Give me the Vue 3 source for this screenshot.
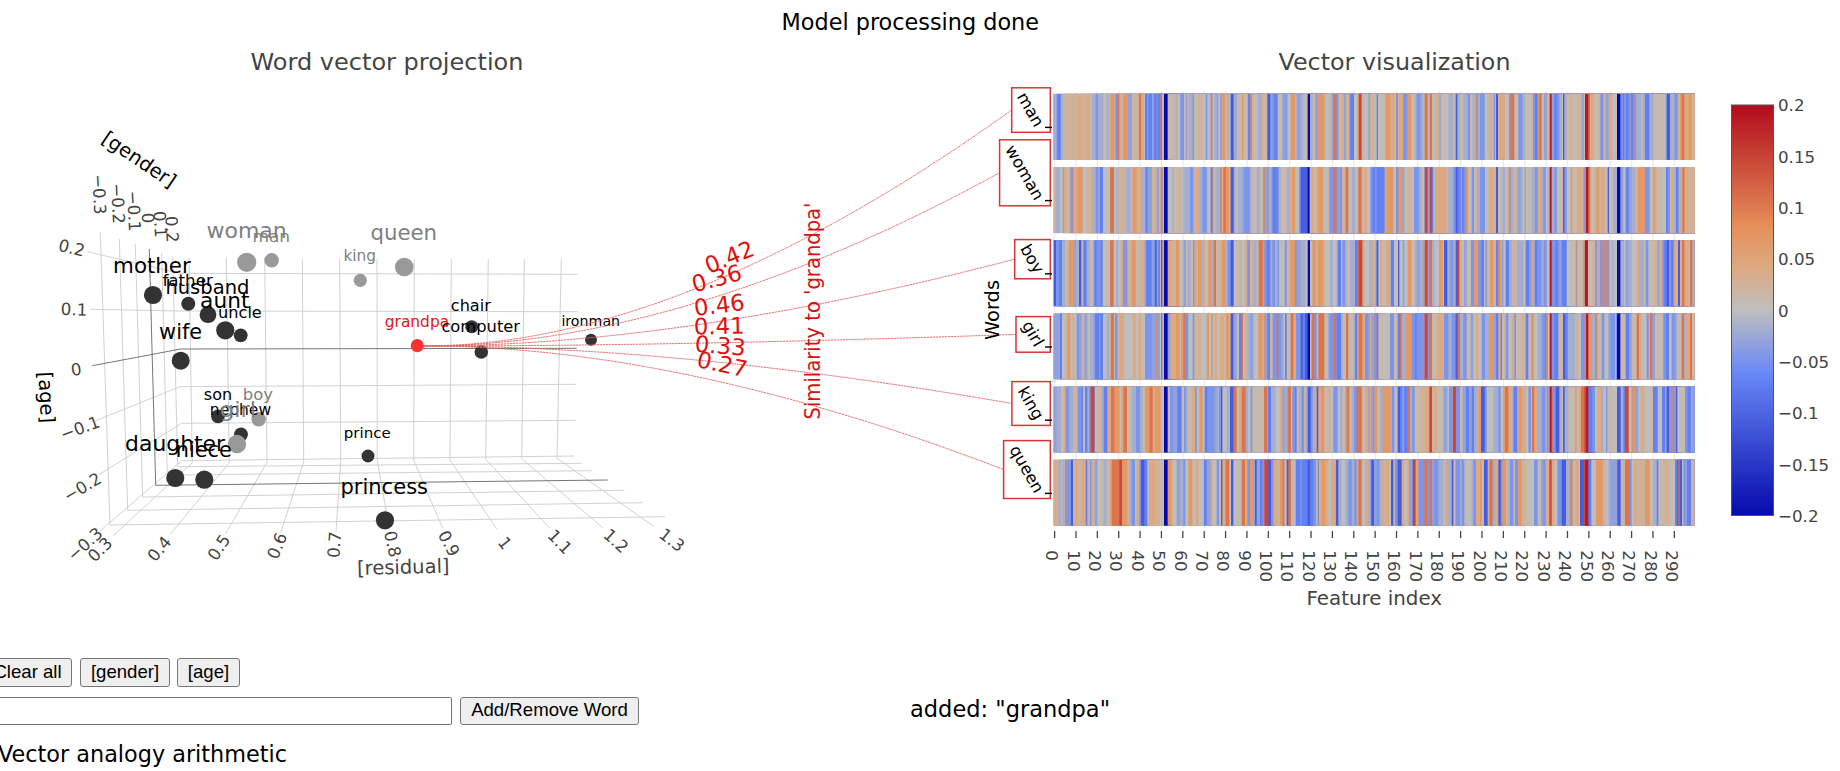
<script setup>
// Word scatter: label, dot centre and radius, label left edge, baseline, width, font size
const words = [
  ['woman', 246.7, 262.3, 9.6, 207.3, 238.3, 79.4, 21.8, 'dim'],
  ['man', 271.7, 260.3, 7.2, 253.3, 242.3, 36.7, 16.5, 'dim'],
  ['king', 360.3, 280.3, 6.6, 344.3, 261.3, 31.7, 15, 'dim'],
  ['queen', 404.3, 267, 9.3, 371.3, 240.3, 65.7, 21, 'dim'],
  ['mother', 153, 295, 9.1, 114, 272.7, 76.7, 21, ''],
  ['father', 188.3, 303.7, 7, 163.3, 286, 49.4, 16.2, ''],
  ['husband', 208, 314.7, 8.4, 166.3, 294, 83, 19.5, ''],
  ['aunt', 225.3, 330.3, 9.1, 201, 308, 48.3, 21.2, ''],
  ['uncle', 240.7, 335.3, 6.9, 219, 318.3, 42.7, 15.8, ''],
  ['wife', 180.7, 360.7, 9, 160, 339, 42, 20.4, ''],
  ['son', 218, 416.3, 6.9, 204.7, 399.7, 27.3, 15.5, ''],
  ['boy', 258.7, 419.3, 7.2, 243.7, 399.7, 29.3, 15.9, 'dim'],
  ['nephew', 241, 434.3, 6.9, 210.7, 415, 60.3, 15.3, ''],
  ['girl', 237, 444, 9.2, 220.7, 417.3, 35.3, 21.5, 'dim'],
  ['daughter', 175.3, 478, 9.1, 126, 451, 99, 21.5, ''],
  ['niece', 204.3, 479.7, 9.1, 176.7, 457.3, 55, 20.5, ''],
  ['prince', 368, 456, 6.5, 344.7, 437.7, 46, 14.9, ''],
  ['princess', 385, 520.3, 9.1, 341.3, 494.3, 86.7, 20.8, ''],
  ['grandpa', 417.3, 345.7, 6.6, 385.7, 326.7, 63.3, 15.2, 'hot'],
  ['chair', 471.7, 326.7, 6.5, 451.7, 310.7, 39, 15.7, ''],
  ['computer', 481.3, 352, 6.8, 442.3, 332, 77.7, 16, ''],
  ['ironman', 591, 339.7, 6, 562.3, 325.7, 57.7, 14.2, ''],
]

const gridLines = [
  '100.3,232.3 110,525 665,516.7',
  '119.3,239 127.7,510.3 643,502.7',
  '135.3,244.3 142.7,497 624.3,490.3',
  '161.7,253.3 167.3,475 591.7,470.7',
  '172.7,256.7 177.7,466.7 582.3,463.3',
  '189,258 192.3,462.7 113.3,535.7',
  '226.3,258 229.3,462.7 170.3,534.3',
  '264.7,258 267,462.3 225.3,534.3',
  '302.3,258.5 303.7,462 280.7,532.7',
  '339.7,259 340.7,461.3 336,531.7',
  '377,259.3 377.3,460.7 389.3,528.3',
  '414.3,259.3 413.7,460 442.7,528.3',
  '451.3,259.3 450,460 496.7,529',
  '488.3,259.3 485.7,459.3 550,528.3',
  '524.3,259.3 521.7,458.7 602.7,527.7',
  '561.3,259.3 557,458.3 654.3,526.7',
  '87.3,251.7 180,273.3 578,274.3',
  '90.7,309.3 180,311 577.7,311.7',
  '95,421 180,386.7 576,384.3',
  '98.3,475 181.7,423.3 575.7,420.3',
  '100,531 181.7,460.7 574.3,456',
]
const zeroLines = ['149.3,249 155.7,485.3 607.7,480', '92.3,365.7 180.7,349 576.7,348.3']

// Rotated tick labels: text, centre x, centre y, angle
const ticks3d = [
  ['0.2', 71.7, 247.7, 13], ['0.1', 74, 309.3, 2], ['0', 76.3, 369.3, -8],
  ['−0.1', 80, 428, -20], ['−0.2', 82.3, 487, -31], ['−0.3', 84.7, 544, -42],
  ['0.3', 100, 549.3, -45], ['0.4', 159.3, 548.7, -50], ['0.5', 218.7, 547.3, -57],
  ['0.6', 277, 545.7, -68], ['0.7', 334.3, 544.7, -86], ['0.8', 392.7, 544, 78],
  ['0.9', 449, 543.3, 62], ['1', 505, 543, 52], ['1.1', 560, 541.7, 46],
  ['1.2', 616, 540.7, 42], ['1.3', 672, 540, 38],
  ['−0.3', 99.3, 194.3, 87], ['−0.2', 118, 203.5, 87], ['−0.1', 134, 211, 87],
  ['0', 148, 218, 87], ['0.1', 160.3, 224.3, 87], ['0.2', 172, 229.3, 87],
]

const similarities = [
  ['0.42', 729.3, 257, -22], ['0.36', 716.7, 278.3, -15], ['0.46', 719.3, 305, -7],
  ['0.41', 719.3, 326, -1], ['0.33', 720.3, 345.7, 5], ['0.27', 722.3, 364.3, 12],
]

// Word boxes beside the heatmap: left, top, bottom
const rowLabels = [
  ['man', 1011.7, 87.8, 132.3], ['woman', 999.6, 139.8, 205.8], ['boy', 1014.7, 239.6, 278.8],
  ['girl', 1016, 316.6, 352.2], ['king', 1011.9, 381.6, 425.4], ['queen', 1003.6, 440.6, 498.5],
]

const level = {
  A: -0.2, B: -0.11, C: -0.07, D: -0.048, E: -0.033, F: -0.018, G: 0,
  H: 0.011, I: 0.024, J: 0.042, K: 0.068, L: 0.105, M: 0.145, N: 0.188,
}
const scale = [
  [0, 5, 10, 172], [0.35, 106, 137, 247], [0.5, 190, 190, 190],
  [0.6, 220, 170, 132], [0.7, 230, 145, 90], [1, 178, 10, 28],
]
function colour(code) {
  if (code === 'P') return 'rgb(161,143,184)'
  if (code === 'Q') return 'rgb(194,142,130)'
  const t = (level[code] + 0.2) / 0.4
  const i = Math.max(1, scale.findIndex(s => s[0] >= t))
  const a = scale[i - 1]
  const b = scale[i]
  const f = (t - a[0]) / (b[0] - a[0])
  return `rgb(${[1, 2, 3].map(k => Math.round(a[k] + (b[k] - a[k]) * f)).join(',')})`
}

// Each row is two runs of stops: offset in thirds of a pixel, then a level letter
const heat = [
  ['40E 44G 47E 52C 62F 70G 74J 78I 112J 123I 139J 150H 155F 167D 174F 190G 200F 206I 212K 223H 226D 233L 238I 250K 264E 276H 282I 297L 303J 312G 315C 321D 326C 336E 342C 350D 353C 361L 366G 368I 372A 383H 400I 408F 413H 421D 432G 437E 441I 446F 458D 462H 474I 485H 492G 497D 502G 509F 512Q 518H 522F 530E 535G 540E 545K 555I 564F 567H 572B 581F 587E 590H 606K 610H 622F 624C 630Q 636I 642H 654F 664J 669H 675I 682B 691E 696D 703C 713H 727E 737D 742G 752K 766G 770E 781F 790G 797I 803A 810F 818H 825E 833K 843K 852I 858G 865H 872F 878D 881L 889D 895H 905J 912E 918I 927E 931C 942G 952J 956M 965H 975G 985E 990H',
   '0I 12H 20C 24G 36H 46K 60J 74H 78D 84J 99D 110E 114K 123H 137E 142D 150E 155F 160H 164L 173G 179L 186H 195I 208E 212H 225G 235F 250H 257B 262F 270H 280F 293D 300H 308F 318Q 324F 330D 344G 350H 358J 366G 371D 375H 378B 384J 405G 412H 417P 422L 433H 445D 457F 465H 478G 483I 489D 495C 503K 508L 515G 522E 530I 536G 539N 545E 553C 560D 568F 575H 579B 583F 590H 600J 606H 622I 635E 642H 645N 655L 660J 672H 685I 691D 700I 707E 716J 727G 735H 741A 751D 758C 763E 767C 775D 781P 784C 789P 798F 813H 818F 825C 838F 850H 878G 885F 890B 900F 914D 923I 930K 935L 943J 956K 965I'],
  ['40I 47F 60G 68E 72J 80H 88F 92P 100J 113K 128G 140I 153J 158F 167D 174E 180C 189G 210L 222G 228F 232I 258F 272H 277K 290I 300J 304F 315D 319C 323E 336I 350E 357I 362Q 369G 372A 383G 393H 398F 402H 415I 422G 430F 450D 460I 470J 478F 487D 500F 503G 512C 517Q 520H 527F 540Q 545J 550L 558K 567J 572B 581F 587G 595F 608E 612D 630F 635H 650F 660H 669Q 676E 682P 686F 695D 698C 715F 722H 740F 748J 757K 766G 777D 782B 803A 809H 813J 822G 828J 835K 850G 858H 868D 880L 889D 893E 900D 906I 917L 925G 935F 945H 955L 965H 972J 982G 990F',
   '0E 3D 8C 15D 20C 44J 50K 70G 78D 85K 97E 103H 115I 125H 132D 147F 155H 162P 165M 173E 179M 186C 190G 195F 198J 230H 235F 250D 257B 262C 272E 276C 282D 288K 295G 305D 312H 320K 323F 330D 345G 350H 358J 370I 378B 384H 395F 405H 413J 417P 422F 430I 442E 452F 458G 464E 468H 480G 485F 495D 503J 513F 520D 527G 533F 536H 539N 545F 553D 560G 568H 575I 579B 583D 590G 602K 607H 622J 633H 640P 648N 655L 660J 665G 672I 680K 687I 697J 705G 713B 717H 730F 741A 751E 760G 767C 776E 785F 795I 803K 825D 836E 840H 850K 856I 860H 878G 888C 893D 900H 905J 912F 918C 925F 932J 937L 943J 955I'],
  ['40D 42B 48D 57C 66F 75H 80I 87K 103E 108F 117B 124H 130C 140F 150H 160E 163C 170D 182C 188G 198H 210L 221G 228F 235G 241I 248P 255Q 258D 262I 275K 287H 297I 310J 314E 318C 335E 341D 345B 350E 355C 360H 363B 367J 370F 372A 383J 393I 408K 418G 430E 438H 443F 452H 459D 463J 475K 483F 490J 495H 505K 513F 521L 528H 532I 545K 555F 563D 572B 581G 590H 598I 606G 615J 622D 630I 640F 650H 656L 668K 673D 680C 691F 697D 705F 713D 717H 727G 734D 740I 752K 765P 770E 782F 797G 803A 810G 817K 827I 833K 850I 855G 870F 878G 890F 893C 903G 907D 915F 920H 930F 945C 952L 956M 967J 973G 988F',
   '0F 5J 12H 16E 20B 25G 30J 36H 47J 58F 63C 72G 84B 88G 98E 103G 113K 124H 135F 140E 150F 160Q 165M 173E 178L 186F 193G 207K 218H 222B 232F 238E 243D 250F 257B 261M 268J 272H 282E 290G 295H 303D 312K 325D 334C 342G 345E 352H 360K 370I 378C 383Q 390J 395E 400G 407C 417F 427H 432J 436G 440F 460H 467C 478E 485J 490E 495C 502D 515F 521D 530G 539N 545D 556C 563D 568E 575C 590G 603H 613G 617Q 622H 640Q 645N 654H 670I 675P 680F 690P 700Q 710P 718G 725F 730G 741A 751F 762G 767E 775F 785G 800J 808F 822H 827D 835H 850I 862E 868J 877D 882C 890B 897D 903C 911J 920H 924B 930I 936L 943J 952I 960L 967F'],
  ['40E 60C 66G 76I 83K 91G 97J 103G 110D 117E 125I 133E 142H 150F 160E 165C 177D 181C 189G 200F 207J 213L 222H 225D 232I 238J 252G 278J 287G 295J 303H 310G 315D 335E 348Q 353E 360G 363C 367I 372A 383E 391J 408K 419H 423K 430L 435D 445G 458D 463H 468I 483G 500K 507G 513K 518H 525J 531G 540J 552H 558K 566J 572B 580E 590H 597C 605L 609H 615I 622F 630E 640G 655K 667J 673Q 677E 682C 690I 698D 710L 715D 722E 730G 735C 740H 752L 760J 768D 782B 788C 795B 803A 810H 815L 823D 830H 835L 853H 865E 870D 880L 888D 890C 903F 908H 918L 925H 940F 945C 951K 957L 967J 975D 985E',
   '0J 4E 12P 20C 25H 40G 50H 60D 72H 83C 90L 95F 108K 125D 135C 140D 158P 164M 173D 177L 186H 200J 218I 222D 235F 245D 257B 263L 270F 280D 290H 302E 310G 318J 325G 335D 345F 357K 371E 378C 385J 392C 396G 403J 408D 415G 425J 433D 438H 455I 467C 475H 483K 492G 503F 515D 525C 528Q 534G 539N 545D 553C 565H 575I 579B 585C 593F 615I 625G 633D 642P 648N 655K 665F 675Q 682H 695D 703G 715E 722D 735J 738D 741A 751H 767C 777E 785H 800L 807J 815G 830D 836J 840L 847E 855H 880D 888C 897G 905D 913E 920H 935L 942F 948J 960L 966H'],
  ['40E 50F 63H 72J 77D 85E 90F 100H 105I 113D 125C 129H 135C 142F 147D 152M 163D 165H 175I 187E 192C 202J 213L 223K 238H 243J 250L 261H 275F 288D 300F 308H 315K 328L 338J 345K 362G 372A 383H 390D 398E 412C 425H 432D 437F 443H 455J 465D 470H 478K 488G 494C 502D 522E 530F 537D 543B 547G 560F 570B 580L 590H 598J 605L 617F 625G 632D 637H 672L 681J 683C 693F 707G 720J 727E 733F 743L 753H 757D 765C 770H 777F 785D 792I 797F 803B 812D 818F 824J 830B 835J 843K 853H 862I 872G 880D 893G 900F 907H 917Q 923L 928H 935F 942D 950L 965J 968G 975J 985E',
   '0J 3E 10D 13K 22H 30F 38K 62F 66D 73G 83B 90C 97E 102C 112L 120F 127D 134H 150I 165J 178M 186I 195J 200H 220E 232G 237D 247Q 249M 258D 270H 278E 288C 297E 305C 312F 322J 327K 333B 344D 350G 370F 385D 392G 400K 405L 415J 425G 428D 432C 442G 445K 455J 467G 475D 483I 486L 493J 503F 515D 527H 530P 535E 539N 545L 548D 557B 568F 575H 579B 584F 595H 615K 620H 628J 633L 643M 648N 655C 667D 675H 683J 693F 700G 708D 712H 730G 741B 752F 760C 765M 776H 785Q 788K 795E 805G 812J 822H 830G 845I 849C 863G 876C 885E 890B 897P 918B 922G 935H 945D 953C 962E'],
  ['40J 50I 55F 63I 68F 75Q 80D 93B 99H 104J 112I 123J 137C 142I 150D 154J 158I 164E 172G 180H 190F 200H 207J 215L 238M 246K 262I 268F 275D 285G 290J 298D 303B 313C 322H 328J 345I 360H 372A 383K 393J 398G 410E 420F 430D 436G 445K 457H 468J 475G 488I 492C 500E 512J 518G 530D 537H 543B 547J 557L 568G 573B 580G 590H 605L 615J 622D 630K 640E 645B 650E 660C 668P 673M 685B 693D 700J 710I 720K 728L 733G 740B 745L 753H 760G 767C 780D 785C 803B 810C 820D 828H 833C 836J 845K 855J 865G 873J 885F 888B 895F 905G 915J 918F 925D 935F 943D 950J 955L 965G 975J 985F',
   '0E 4B 12E 20D 28F 36J 42I 50J 58G 63B 70I 75D 83B 95J 103G 112J 117E 128B 132M 137J 145P 150D 163L 172D 179L 186E 193D 205F 220G 225J 232F 245B 250I 257D 270F 275D 283H 290G 305F 310D 318J 330K 335H 342B 353I 358L 368F 375J 385B 392D 397K 408I 415F 420D 430H 435D 444K 455I 465H 475G 492D 503H 513E 520D 527I 532J 538M 545J 553G 562D 575B 588F 600Q 608H 617J 627G 630B 640M 645N 655C 664G 678K 698I 708G 715F 720E 742B 752G 758I 765L 778D 785G 790J 797I 815I 825K 840H 850F 860C 865H 880I 897H 905G 915C 922B 925L 929B 936G 940D 947F 950C 963I'],
]
const heatRight = 1694.7
const heatRows = heat.map(([left, right], r) => ({
  y: 93.9 + r * 73.17,
  cells: [[left, 1040], [right, 1370]].flatMap(([run, base]) =>
    run.split(' ').map(s => {
      const x = base + parseInt(s) / 3
      return { x, w: heatRight - x, fill: colour(s.slice(-1)) }
    })),
}))

const features = Array.from({ length: 30 }, (_, i) => ({ label: i * 10, x: 1054.6 + i * 21.37 }))
const barTicks = ['0.2', '0.15', '0.1', '0.05', '0', '−0.05', '−0.1', '−0.15', '−0.2']
</script>

<template>
  <main class="page">
    <header class="status">
      <svg class="line" width="1840" height="38">
        <text x="781.5" y="29.5" textLength="257.5" lengthAdjust="spacingAndGlyphs" class="heading">Model processing done</text>
      </svg>
    </header>

    <svg class="plots" width="1840" height="620" viewBox="0 38 1840 620">
      <defs>
        <linearGradient id="bar" x1="0" y1="1" x2="0" y2="0">
          <stop v-for="s in scale" :key="s[0]" :offset="s[0]" :stop-color="`rgb(${s[1]},${s[2]},${s[3]})`" />
        </linearGradient>
      </defs>

      <text x="250.5" y="70" textLength="273" lengthAdjust="spacingAndGlyphs" class="title">Word vector projection</text>
      <text x="1278.5" y="70" textLength="232" lengthAdjust="spacingAndGlyphs" class="title">Vector visualization</text>

      <g class="grid">
        <polyline v-for="p in gridLines" :key="p" :points="p" />
      </g>
      <g class="zero">
        <polyline v-for="p in zeroLines" :key="p" :points="p" />
      </g>
      <text
        v-for="(t, i) in ticks3d" :key="'t' + i" class="tick mid"
        :transform="`translate(${t[1]} ${t[2]}) rotate(${t[3]})`" y="6"
      >{{ t[0] }}</text>
      <text class="axis dark mid" transform="translate(138.7 160) rotate(34)" y="6">[gender]</text>
      <text class="axis dark mid" transform="translate(45.7 397.3) rotate(87)" y="6">[age]</text>
      <text class="axis mid" transform="translate(403.3 567.7) rotate(-1.5)" y="6">[residual]</text>

      <circle v-for="w in words" :key="'d' + w[0]" :cx="w[1]" :cy="w[2]" :r="w[3]" :class="['dot', w[8]]" />
      <text
        v-for="w in words" :key="'w' + w[0]" :x="w[4] - 0.9" :y="w[5]" :font-size="w[7]"
        :textLength="w[6] + 1" lengthAdjust="spacingAndGlyphs" :class="['word', w[8]]"
      >{{ w[0] }}</text>

      <g class="links">
        <path
          v-for="b in rowLabels" :key="'l' + b[0]"
          :d="`M423 346Q682 346 ${b[1]} ${(b[2] + b[3]) / 2}`"
        />
      </g>
      <text
        v-for="s in similarities" :key="s[0]" class="similarity mid"
        :transform="`translate(${s[1]} ${s[2]}) rotate(${s[3]})`" y="8"
      >{{ s[0] }}</text>
      <text class="simtitle" transform="translate(820 419.5) rotate(-90)" textLength="217" lengthAdjust="spacingAndGlyphs">Similarity to 'grandpa'</text>

      <g class="vgrid">
        <path v-for="f in features" :key="'g' + f.label" :d="`M${f.x} 91V528`" />
      </g>
      <g v-for="(row, r) in heatRows" :key="'h' + r">
        <rect x="1053.5" :y="row.y" :width="heatRight - 1053.5" height="66" fill="#bebebe" />
        <rect v-for="(c, i) in row.cells" :key="i" :x="c.x" :y="row.y" :width="c.w" height="66" :fill="c.fill" />
      </g>
      <g v-for="(b, i) in rowLabels" :key="'b' + b[0]">
        <rect class="box" :x="b[1]" :y="b[2]" :width="1050.3 - b[1]" :height="b[3] - b[2]" />
        <text class="rowlabel" :transform="`translate(1034.8 ${128.3 + i * 73.2}) rotate(60)`">{{ b[0] }}</text>
        <rect x="1045" :y="126.7 + i * 73.2" width="7" height="1.4" />
      </g>
      <text class="axis dark" transform="translate(999.3 340) rotate(-90)" textLength="60" lengthAdjust="spacingAndGlyphs">Words</text>

      <g v-for="f in features" :key="'f' + f.label">
        <path class="mark" :d="`M${f.x} 531V538`" />
        <text class="tick" :transform="`translate(${f.x - 8.3} 550.3) rotate(90)`">{{ f.label }}</text>
      </g>
      <text x="1306.5" y="604.5" class="axis" textLength="135.5" lengthAdjust="spacingAndGlyphs">Feature index</text>

      <rect x="1731.5" y="105" width="42" height="410.5" fill="url(#bar)" stroke="#555" />
      <text v-for="(t, i) in barTicks" :key="'c' + t" x="1778" :y="111.3 + i * 51.33" class="tick">{{ t }}</text>
    </svg>

    <section class="controls">
      <div class="buttons">
        <button class="clear">Clear all</button>
        <button class="gender">[gender]</button>
        <button class="age">[age]</button>
      </div>
      <div class="entry">
        <input type="text" />
        <button class="add">Add/Remove Word</button>
        <svg class="note" width="240" height="28">
          <text x="1" y="19.5" textLength="200" lengthAdjust="spacingAndGlyphs" class="heading">added: "grandpa"</text>
        </svg>
      </div>
      <svg class="line" width="400" height="38">
        <text x="-2" y="28.5" textLength="289" lengthAdjust="spacingAndGlyphs" class="heading">Vector analogy arithmetic</text>
      </svg>
    </section>
  </main>
</template>

<style>
body { background: #fff; overflow: hidden; }
</style>

<style scoped>
.page { width: 1840px; height: 771px; overflow: hidden; display: flex; flex-direction: column; font-family: "DejaVu Sans", Verdana, sans-serif; }
.status { height: 38px; }
.line, .plots, .note { display: block; flex: none; }
.heading { font-size: 22.5px; fill: #000; }
.title { font-size: 23.5px; fill: #444; }
.grid polyline { fill: none; stroke: #ccc; stroke-width: 0.9; }
.zero polyline { fill: none; stroke: #666; stroke-width: 0.9; }
.tick { font-size: 16.7px; fill: #444; }
.axis { font-size: 19.5px; fill: #444; }
.dark { fill: #000; }
.mid { text-anchor: middle; }
.dot { fill: #333; }
.dot.dim { fill: #999; }
.dot.hot { fill: #ff3333; }
.word { fill: #000; }
.word.dim { fill: #808080; }
.word.hot { fill: #e01515; }
.links path { fill: none; stroke: #e86060; stroke-width: 0.9; stroke-dasharray: 2.4 0.6; }
.similarity { font-size: 22.8px; fill: #e01010; }
.simtitle { font-size: 20.5px; fill: #d91010; }
.vgrid path { stroke: #eaeaea; stroke-width: 1.3; }
.box { fill: none; stroke: #d93535; stroke-width: 1.5; }
.rowlabel { font-size: 16.5px; fill: #000; text-anchor: end; }
.mark { stroke: #444; stroke-width: 1.3; }
.controls { display: flex; flex-direction: column; align-items: flex-start; }
.buttons { display: flex; height: 29px; margin-bottom: 10px; }
.entry { display: flex; height: 28px; margin-bottom: 8px; }
button { box-sizing: border-box; padding: 0 0 2px; border: 1px solid #767676; border-radius: 3px; background: #efefef; color: #000; font: 18.6px "Liberation Sans", Arial, sans-serif; white-space: nowrap; }
.clear { width: 84px; margin: 0 8px 0 -12px; padding-right: 5px; }
.gender { width: 90px; margin-right: 7px; }
.age { width: 63px; }
input { box-sizing: border-box; width: 472px; margin: 0 8px 0 -20px; border: 1px solid #767676; border-radius: 2px; background: #fff; }
.add { width: 179px; }
.note { margin-left: 270px; }
</style>
